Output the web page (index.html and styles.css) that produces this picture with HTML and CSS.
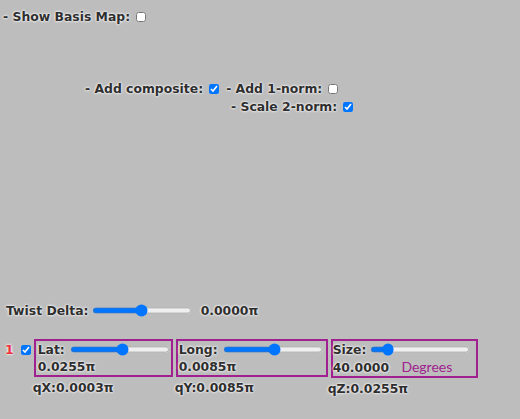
FILE: index.html
```html
<!DOCTYPE html>
<html lang="en">
<head>
    <meta charset="UTF-8">
    <title>Basis Map</title>
    <link rel="stylesheet" href="styles.css">
</head>
<body>

    <!-- Basis map toggle -->
    <div class="row top">
        <span>- Show Basis Map:</span>
        <input type="checkbox">
    </div>

    <!-- Composite options -->
    <div class="options">
        <div class="row">
            <span>- Add composite:</span>
            <input type="checkbox" checked>
            <span class="gap">- Add 1-norm:</span>
            <input type="checkbox">
        </div>
        <div class="row scale">
            <span>- Scale 2-norm:</span>
            <input type="checkbox" checked>
        </div>
    </div>

    <!-- Twist -->
    <div class="row twist">
        <span>Twist Delta:</span>
        <input type="range" class="slider" min="0" max="100" value="50">
        <span class="value">0.0000π</span>
    </div>

    <!-- Rotation controls -->
    <div class="controls">
        <div class="index">
            <span class="num">1</span>
            <input type="checkbox" checked>
        </div>
        <div class="cell">
            <div class="box lat">
                <div class="line">
                    <span>Lat:</span>
                    <input type="range" class="slider" min="0" max="100" value="53">
                </div>
                <div>0.0255π</div>
            </div>
            <div class="q">qX:0.0003π</div>
        </div>
        <div class="cell">
            <div class="box long">
                <div class="line">
                    <span>Long:</span>
                    <input type="range" class="slider" min="0" max="100" value="52">
                </div>
                <div>0.0085π</div>
            </div>
            <div class="q">qY:0.0085π</div>
        </div>
        <div class="cell">
            <div class="box size">
                <div class="line">
                    <span>Size:</span>
                    <input type="range" class="slider" min="0" max="100" value="13">
                </div>
                <div>40.0000 <span class="unit">Degrees</span></div>
            </div>
            <div class="q">qZ:0.0255π</div>
        </div>
    </div>

</body>
</html>
```

FILE: styles.css
```css
/* General Styles */
body {
    margin: 0;
    background-color: #bdbdbd;
    font-family: "DejaVu Sans", Verdana, sans-serif;
    font-size: 12.4px;
    line-height: 17px;
    font-weight: bold;
    color: #2e2e2e;
    text-shadow: 0 0 3px #fff, 0 0 2px #fff;
}

.row {
    display: flex;
    align-items: center;
}

input[type="checkbox"] {
    width: 10px;
    height: 10px;
    margin: 0 0 0 6px;
}

.top {
    padding: 8px 0 0 3px;
}

/* Composite options */
.options {
    margin-top: 55px;
    padding-left: 85px;
}

.gap {
    margin-left: 7px;
}

.scale {
    margin: 1px 0 0 146px;
}

/* Sliders */
.slider {
    zoom: 0.775;
    margin: 0;
}

.twist {
    margin-top: 187px;
    padding-left: 6px;
}

.twist .slider {
    margin-left: 4px;
}

.twist .value {
    margin-left: 9px;
}

/* Controls row */
.controls {
    display: flex;
    margin-top: 20px;
    padding-left: 5px;
}

.index {
    display: flex;
    align-items: center;
    height: 17px;
    margin-top: 2px;
}

.num {
    color: #f0303a;
}

.index input[type="checkbox"] {
    margin: 0 0 0 7px;
}

.box {
    box-sizing: border-box;
    border: 2px solid #a0208f;
    padding: 0 0 0 1px;
}

.line {
    display: flex;
    align-items: center;
    gap: 5px;
}

.lat {
    width: 139px;
    margin-left: 3px;
    padding-left: 2px;
}

.long {
    width: 152px;
    margin-left: 3px;
}

.size {
    width: 147px;
    margin-left: 3px;
    padding-left: 0;
}

.size .line {
    gap: 4px;
}

.unit {
    margin-left: 8px;
    font-family: Lato, sans-serif;
    font-weight: normal;
    font-size: 14px;
    color: #a0208f;
    text-shadow: none;
}

.q {
    margin-top: 2px;
    padding-left: 2px;
}

.cell:nth-child(4) .q {
    padding-left: 0;
}
```
